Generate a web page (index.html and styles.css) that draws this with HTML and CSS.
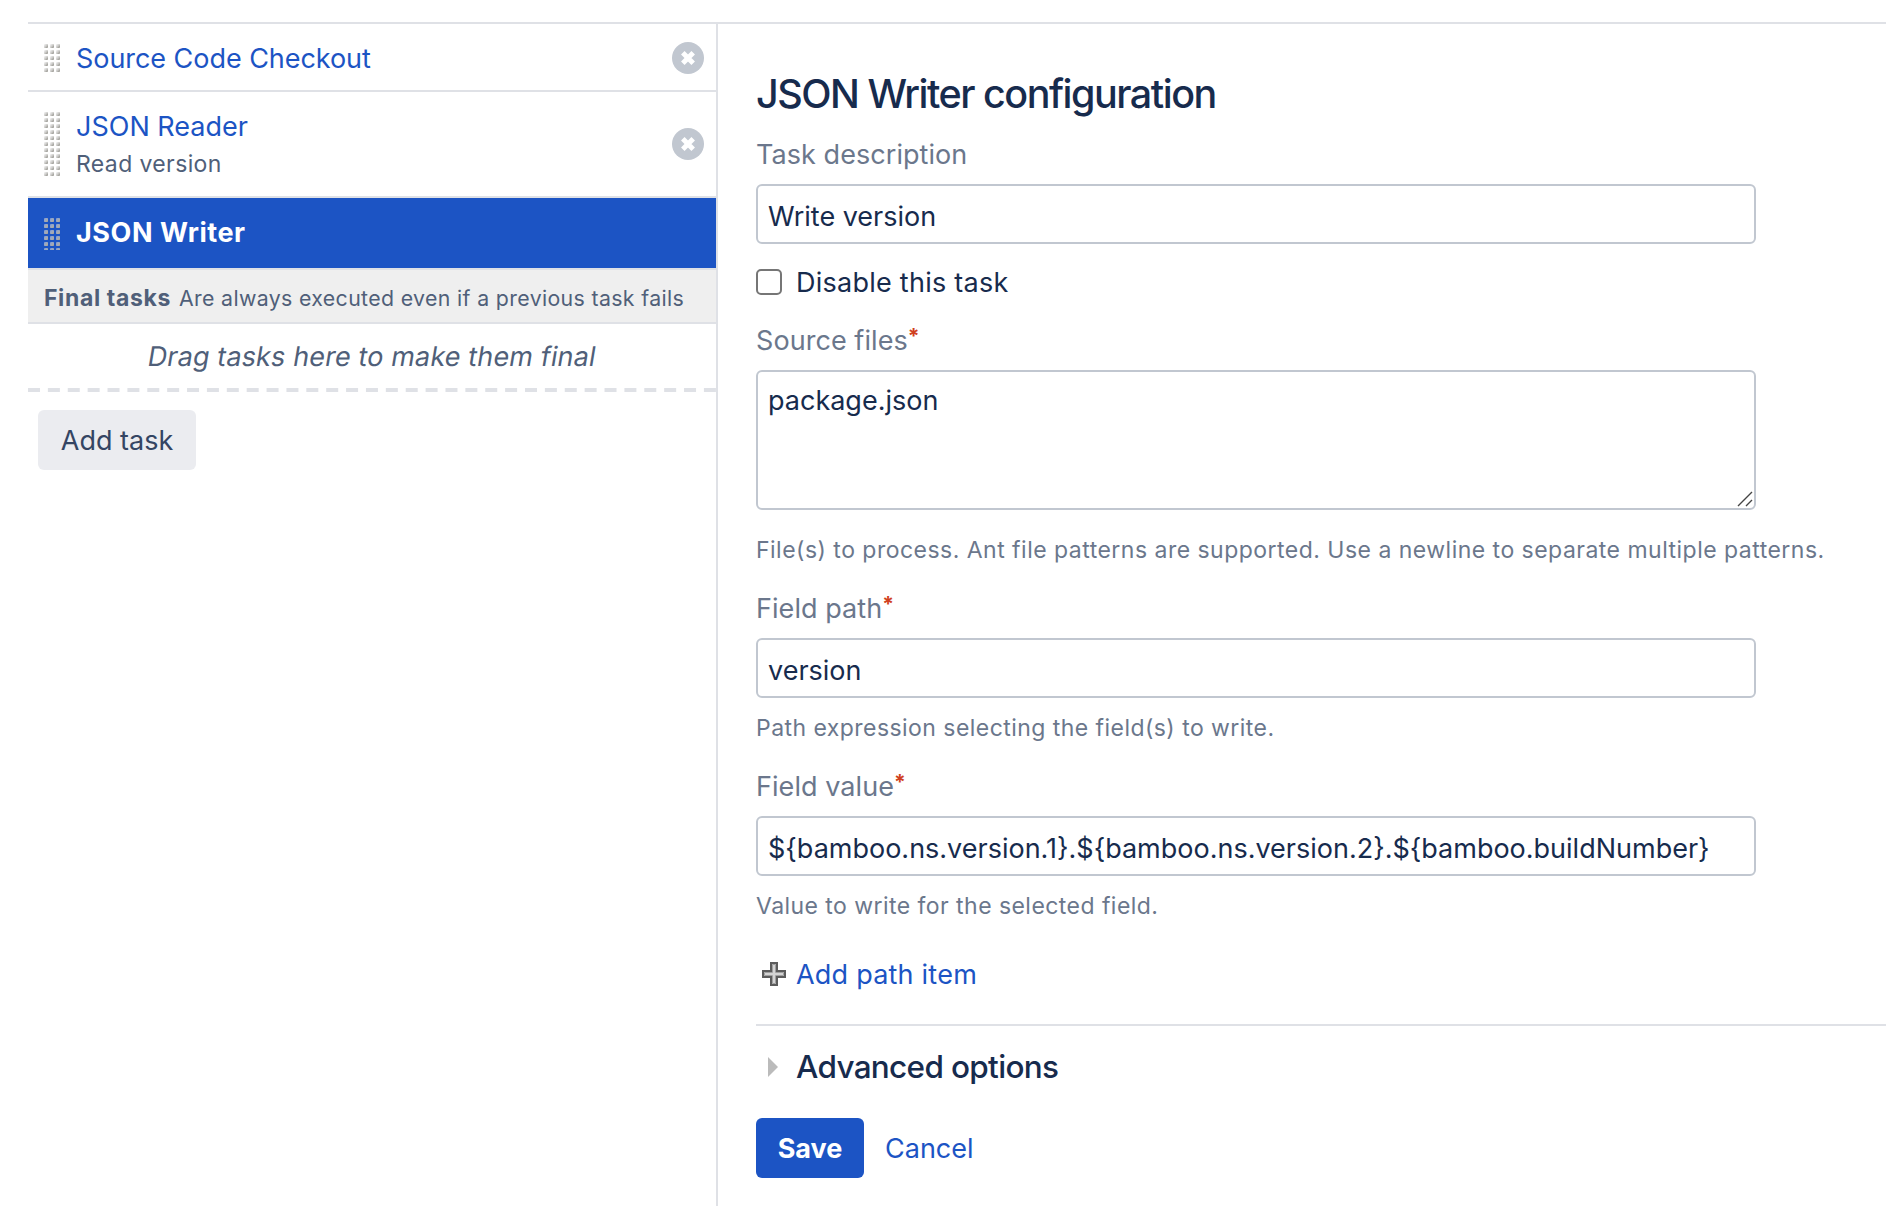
FILE: index.html
```html
<!DOCTYPE html>
<html lang="en">
<head>
<meta charset="utf-8">
<title>Tasks</title>
<link rel="stylesheet" href="styles.css">
</head>
<body>
<div class="layout">
  <aside class="sidebar">
    <ul class="tasks">
      <li class="task one-line">
        <svg class="grip" width="16" height="28"><defs><linearGradient id="dot" x1="0" y1="0" x2="1" y2="1"><stop offset="0.1" stop-color="#ddd" stop-opacity="0.5"/><stop offset="0.75" stop-color="#aaa9a4"/></linearGradient><pattern id="grip" width="6" height="6" patternUnits="userSpaceOnUse"><rect width="4" height="4" rx="0.8" fill="url(#dot)"/></pattern></defs><rect width="16" height="28" fill="url(#grip)"/></svg>
        <div class="task-text"><a class="task-name checkout">Source Code Checkout</a></div>
        <svg class="remove" width="32" height="32" viewBox="0 0 32 32"><circle cx="16" cy="16" r="16"/><path d="M10.8 10.8l10.4 10.4M21.2 10.8L10.8 21.2"/></svg>
      </li>
      <li class="task two-line">
        <svg class="grip" width="16" height="65"><rect width="16" height="65" fill="url(#grip)"/></svg>
        <div class="task-text"><a class="task-name">JSON Reader</a><span class="task-sub">Read version</span></div>
        <svg class="remove" width="32" height="32" viewBox="0 0 32 32"><circle cx="16" cy="16" r="16"/><path d="M10.8 10.8l10.4 10.4M21.2 10.8L10.8 21.2"/></svg>
      </li>
      <li class="task active">
        <svg class="grip" width="16" height="32"><rect width="16" height="32" fill="url(#grip)"/></svg>
        <div class="task-text"><a class="task-name">JSON Writer</a></div>
      </li>
    </ul>
    <div class="final-head"><strong>Final tasks</strong><span>Are always executed even if a previous task fails</span></div>
    <div class="drop"><span>Drag tasks here to make them final</span></div>
    <svg class="dashes" width="688" height="4"><line x1="0" y1="2" x2="688" y2="2"/></svg>
    <button class="btn add-task">Add task</button>
  </aside>
  <main class="panel">
    <h2>JSON Writer configuration</h2>
    <label class="label">Task description</label>
    <input class="field" value="Write version">
    <div class="check"><span class="box"></span><span class="check-label">Disable this task</span></div>
    <label class="label">Source files<span class="req">*</span></label>
    <div class="area"><textarea class="field">package.json</textarea><svg class="resize" width="16" height="16"><path d="M1 15L15 1M9 15L15 9"/></svg></div>
    <p class="hint after-area">File(s) to process. Ant file patterns are supported. Use a newline to separate multiple patterns.</p>
    <label class="label">Field path<span class="req">*</span></label>
    <input class="field" value="version">
    <p class="hint short">Path expression selecting the field(s) to write.</p>
    <label class="label">Field value<span class="req">*</span></label>
    <input class="field" value="${bamboo.ns.version.1}.${bamboo.ns.version.2}.${bamboo.buildNumber}">
    <p class="hint short">Value to write for the selected field.</p>
    <div class="add-item">
      <svg width="24" height="24" viewBox="0 0 24 24"><path d="M9 1h6v8h8v6h-8v8H9v-8H1V9h8z" fill="#d4d4d4" stroke="#5c5c5c" stroke-width="2"/><path d="M10.5 2.5h3v8h8v3h-8v8h-3v-8h-8v-3h8z" fill="#d4d4d4" stroke="#a0a0a0"/></svg>
      <a>Add path item</a>
    </div>
    <hr>
    <h3><svg width="10" height="20"><path d="M0 0L10 10L0 20z"/></svg><span>Advanced options</span></h3>
    <div class="actions"><button class="btn save">Save</button><a class="cancel">Cancel</a></div>
  </main>
</div>
</body>
</html>
```
FILE: styles.css
```css
* { box-sizing: border-box; }
body { margin: 0; background: #fff; color: #172b4d; font: 27px/40px Inter, "Liberation Sans", sans-serif; }
ul, p, h2, h3 { margin: 0; padding: 0; list-style: none; }
button, input, textarea { font: inherit; color: inherit; }
a { color: #1c54c4; text-decoration: none; }
.layout { margin: 22px 0 0 28px; border-top: 2px solid #dfe1e6; display: flex; height: 1184px; }
.sidebar { width: 690px; flex: none; border-right: 2px solid #dfe1e6; }
.task { display: flex; align-items: center; height: 68px; padding: 0 12px 0 16px; border-bottom: 2px solid #dfe1e6; }
.task.one-line { padding-top: 2px; }
.task.one-line .task-text { padding-top: 2px; }
.task.two-line { height: 106px; }
.task.active { height: 72px; padding-top: 2px; background: #1c54c4; }
.task.active .task-text { padding-bottom: 2px; }
.task.active .task-name { color: #fff; font-weight: 700; letter-spacing: 0.55px; }
.checkout { letter-spacing: -0.05px; }
.grip { flex: none; margin-right: 16px; }
.task-text { flex: 1; display: flex; flex-direction: column; align-items: flex-start; }
.task-sub { margin: 1px 0; font-size: 23px; line-height: 32px; letter-spacing: 0.38px; color: #505f79; }
.remove { fill: #c1c7d0; }
.remove path { stroke: #fff; stroke-width: 5; }
.final-head { height: 54px; padding: 2px 16px 0; background: #efefef; border-bottom: 2px solid #dfe1e6; display: flex; align-items: baseline; gap: 8px; color: #505f79; line-height: 53px; white-space: nowrap; }
.final-head strong { font-size: 23px; letter-spacing: 0.62px; }
.final-head span { font-size: 21.3px; letter-spacing: 0.36px; }
.drop { height: 64px; padding-top: 1px; line-height: 64px; text-align: center; color: #505f79; }
.drop span { display: inline-block; letter-spacing: 0.13px; transform: skewX(-9.5deg); }
.dashes { display: block; }
.dashes line { stroke: #dfe1e6; stroke-width: 4; stroke-dasharray: 12 7.88; }
.btn { border: 0; border-radius: 6px; height: 60px; padding: 1px 0 0; }
.add-task { display: block; margin: 18px 0 0 10px; width: 158px; background: #ebecf0; color: #344563; }
.panel { flex: 1; padding: 46px 0 0 38px; }
h2 { font-size: 39.5px; line-height: 48px; font-weight: 550; letter-spacing: -1.5px; margin-bottom: 16px; }
.label { display: flex; margin: 20px 0 9px; padding-top: 1px; color: #6b778c; letter-spacing: 0.06px; }
h2 + .label { margin-top: 0; }
.check + .label { margin-top: 18px; }
.req { color: #d04020; font-size: 21px; line-height: 32px; font-weight: 700; }
.field { display: block; width: 1000px; height: 60px; margin: 0; padding: 4px 10px 0; border: 2px solid #c1c7d0; border-radius: 6px; background: #fff; resize: none; outline: 0; overflow: hidden; }
.area { position: relative; width: 1000px; }
.area .field { height: 140px; padding-top: 9px; }
.resize { position: absolute; right: 3px; bottom: 3px; fill: none; stroke: #444; stroke-width: 1.4; }
.check { display: flex; align-items: center; height: 40px; margin-top: 18px; letter-spacing: 0.25px; }
.check-label { padding-top: 2px; }
.box { width: 26px; height: 26px; border: 2px solid #767676; border-radius: 5px; margin-right: 14px; }
.hint { font-size: 23px; line-height: 36px; letter-spacing: 0.48px; margin-top: 12px; color: #6b778c; white-space: nowrap; }
.hint.after-area { margin-top: 22px; }
.hint.short { letter-spacing: 0.45px; }
.add-item { display: flex; align-items: center; gap: 10px; height: 40px; margin-top: 30px; padding-left: 6px; letter-spacing: 0.22px; }
.add-item a { padding-top: 2px; }
hr { margin: 30px 0 0; border: 0; height: 2px; background: #dfe1e6; }
h3 { display: flex; align-items: center; gap: 18px; margin-top: 19px; padding-left: 12px; font-size: 31.5px; line-height: 44px; font-weight: 550; letter-spacing: -0.68px; }
h3 path { fill: #bbb; }
.actions { display: flex; align-items: center; margin-top: 29px; gap: 21px; }
.cancel { padding-top: 1px; }
.save { width: 108px; background: #1c54c4; color: #fff; font-weight: 700; }
```
